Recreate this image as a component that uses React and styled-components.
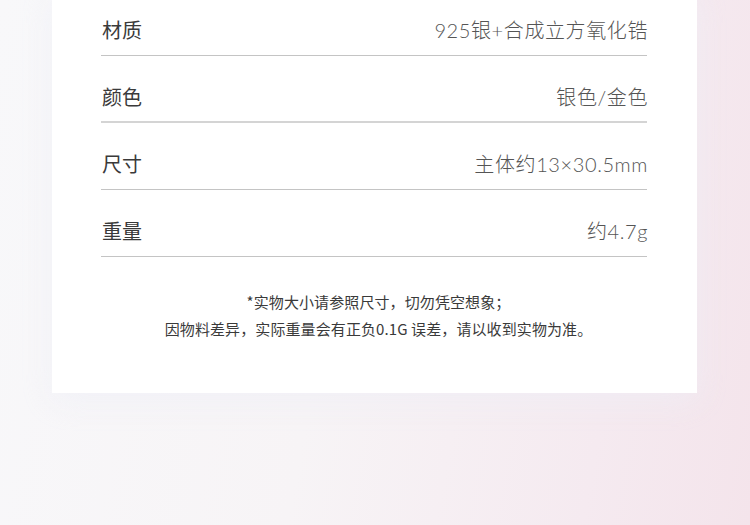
import React from "react";
import styled, { createGlobalStyle } from "styled-components";

const GlobalStyle = createGlobalStyle`
  html, body {
    margin: 0;
    padding: 0;
  }
  body {
    font-family: "Lato", "Noto Sans CJK SC", sans-serif;
  }
`;

const Page = styled.div`
  width: 750px;
  height: 525px;
  overflow: hidden;
  background: linear-gradient(100deg, #f8f8fa 0%, #f7f4f6 45%, #f5eaf0 80%, #f4e4eb 100%);
  display: flex;
  justify-content: center;
  align-items: flex-start;
`;

const Card = styled.div`
  width: 645px;
  margin-top: -11px;
  margin-left: -1px;
  background: #ffffff;
  padding: 0 50px 0 49px;
  box-sizing: border-box;
  height: 404px;
  box-shadow: 0 8px 30px rgba(236, 238, 246, 0.6);
`;

const Row = styled.div`
  display: flex;
  justify-content: space-between;
  align-items: center;
  height: 67px;
  padding-top: 15px;
  box-sizing: border-box;
  border-bottom: ${(props) => (props.thick ? "2px solid #d4d4d4" : "1px solid #c4c4c4")};
`;

const Label = styled.span`
  font-family: "Noto Sans CJK SC", sans-serif;
  font-size: 20px;
  color: #3a3a3a;
  margin-left: 1px;
`;

const Value = styled.span`
  font-family: "Lato", "Noto Sans CJK SC", sans-serif;
  font-size: 20px;
  font-weight: 300;
  color: #555555;
  letter-spacing: 0.6px;
  margin-right: -1px;
`;

const Notes = styled.div`
  padding: 31px 0 0 9px;
  text-align: center;
  font-family: "Noto Sans CJK SC", sans-serif;
  font-size: 15px;
  line-height: 27px;
  letter-spacing: 0.1px;
  color: #3a3a3a;
`;

const specs = [
  { label: "材质", value: "925银+合成立方氧化锆" },
  { label: "颜色", value: "银色/金色", thick: true },
  { label: "尺寸", value: "主体约13×30.5mm" },
  { label: "重量", value: "约4.7g" },
];

const App = () => {
  return (
    <Page>
      <GlobalStyle />
      <Card>
        {specs.map((s) => (
          <Row key={s.label} thick={s.thick}>
            <Label>{s.label}</Label>
            <Value>{s.value}</Value>
          </Row>
        ))}
        <Notes>
          <div>*实物大小请参照尺寸，切勿凭空想象；</div>
          <div>因物料差异，实际重量会有正负0.1G 误差，请以收到实物为准。</div>
        </Notes>
      </Card>
    </Page>
  );
};

export default App;
